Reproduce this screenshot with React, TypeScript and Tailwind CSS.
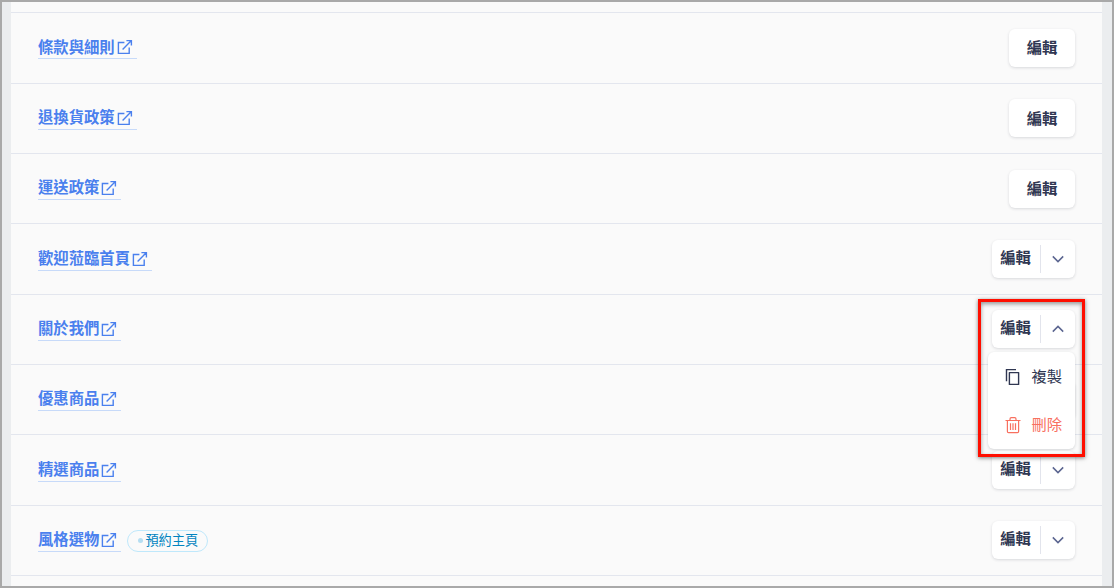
import type { ReactNode } from "react";

type Page = {
  title: string;
  split?: boolean;
  open?: boolean;
  badge?: string;
};

const pages: Page[] = [
  { title: "條款與細則" },
  { title: "退換貨政策" },
  { title: "運送政策" },
  { title: "歡迎蒞臨首頁", split: true },
  { title: "關於我們", split: true, open: true },
  { title: "優惠商品", split: true },
  { title: "精選商品", split: true },
  { title: "風格選物", split: true, badge: "預約主頁" },
];

function ExternalIcon() {
  return (
    <svg width="18" height="18" viewBox="0 0 18 18" fill="none" stroke="currentColor" strokeWidth="1.4" className="ml-px shrink-0">
      <path d="M8.4 4.5H2.4V15.4H13.2V9.6" />
      <path d="M10.4 2.6H15.4V7.6M15.4 2.6L6.6 11.4" />
    </svg>
  );
}

function CopyIcon() {
  return (
    <svg width="18" height="18" viewBox="0 0 18 18" fill="none" stroke="currentColor" strokeWidth="1.4">
      <path d="M2.5 13.2V1.6H12" />
      <path d="M5.4 4.6H14.6V16.4H5.4Z" strokeLinejoin="round" />
    </svg>
  );
}

function TrashIcon() {
  return (
    <svg width="18" height="18" viewBox="0 0 18 18" fill="none" stroke="currentColor" strokeWidth="1.2">
      <path d="M1.5 4.5H16.5M6 4.2V3Q6 1.6 7.3 1.6H10.7Q12 1.6 12 3V4.2" />
      <path d="M3.4 4.5V15.4Q3.4 16.6 4.6 16.6H13.4Q14.6 16.6 14.6 15.4V4.5" />
      <path d="M6.5 7.2V14M9 7.2V14M11.5 7.2V14" />
    </svg>
  );
}

function Chevron({ up }: { up?: boolean }) {
  return (
    <svg width="12" height="8" viewBox="0 0 12 8" fill="none" stroke="#5b6590" strokeWidth="1.5">
      <path d={up ? "M0.8 6.6L6 1.4L11.2 6.6" : "M0.8 1.4L6 6.6L11.2 1.4"} />
    </svg>
  );
}

function MenuItem({ icon, children, danger }: { icon: ReactNode; children: ReactNode; danger?: boolean }) {
  return (
    <button className={`flex h-12 w-full items-center gap-[9.5px] pl-4 text-[15.3px] ${danger ? "text-[#f8705f]" : "text-[#303752]"}`}>
      {icon}
      <span className="pb-1">{children}</span>
    </button>
  );
}

function EditButton({ split, open }: Page) {
  if (!split) {
    return (
      <button className="block h-[38px] w-[66px] rounded-md bg-white pb-0.5 text-[15.3px] leading-[35px] font-bold text-[#303752] shadow-[0_1px_3px_rgba(40,45,60,0.16)]">
        編輯
      </button>
    );
  }
  return (
    <div className="relative flex h-[38px] w-[83px] items-center rounded-md bg-white shadow-[0_1px_3px_rgba(40,45,60,0.16)]">
      <button className="w-12 pr-px pb-[4.5px] text-[15.3px] leading-none font-bold text-[#303752]">編輯</button>
      <span className="h-7 w-px bg-[#e2e4ec]" />
      <button className="flex flex-1 justify-center">
        <Chevron up={open} />
      </button>
      {open && (
        <>
          <div className="absolute top-[42px] right-0 z-10 h-[97px] w-[87px] rounded-md bg-white pt-px shadow-[0_1px_3px_rgba(40,45,60,0.18)]">
            <MenuItem icon={<CopyIcon />}>複製</MenuItem>
            <MenuItem icon={<TrashIcon />} danger>刪除</MenuItem>
          </div>
          <div className="pointer-events-none absolute -top-[11px] -right-[10px] z-20 h-[158px] w-[107px] border-3 border-[#ff0e00] shadow-[0_1px_4px_rgba(0,0,0,0.5),inset_0_2px_4px_rgba(0,0,0,0.4)]" />
        </>
      )}
    </div>
  );
}

function PageRow(page: Page) {
  return (
    <div className="flex h-[70.35px] items-start justify-between border-b border-[#e3e6ee] pr-[27px] pl-[27px]">
      <div className="flex items-start">
        <a href="#" className="mt-[23.2px] flex h-[23px] items-center border-b border-[#c7daf9] pr-[3px] text-[15.35px] leading-[18px] font-bold text-[#4a80ee]">
          <span className="pb-[3.7px]">{page.title}</span>
          <ExternalIcon />
        </a>
        {page.badge && (
          <span className="mt-6 ml-1.5 flex h-[22px] w-[81px] items-center rounded-full border border-[#bfe8fb] pl-[9.5px] text-[13.2px] leading-5 text-[#0284c0]">
            <span className="mr-[2.5px] size-[5px] rounded-full bg-[#b5def2]" />
            <span className="pb-0.5">{page.badge}</span>
          </span>
        )}
      </div>
      <div className="mt-[15.6px]">
        <EditButton {...page} />
      </div>
    </div>
  );
}

export default function App() {
  return (
    <div
      lang="zh-Hant"
      className="h-[588px] w-[1114px] overflow-hidden border-2 border-[#a9a9a9] bg-[#ebedef] pr-[10px] pl-[9px] font-['Noto_Sans_CJK_TC',sans-serif]"
    >
      <div className="h-full bg-[#fafafa]">
        <div className="h-[11.3px] border-b border-[#e3e6ee]" />
        {pages.map((page) => (
          <PageRow key={page.title} {...page} />
        ))}
      </div>
    </div>
  );
}
